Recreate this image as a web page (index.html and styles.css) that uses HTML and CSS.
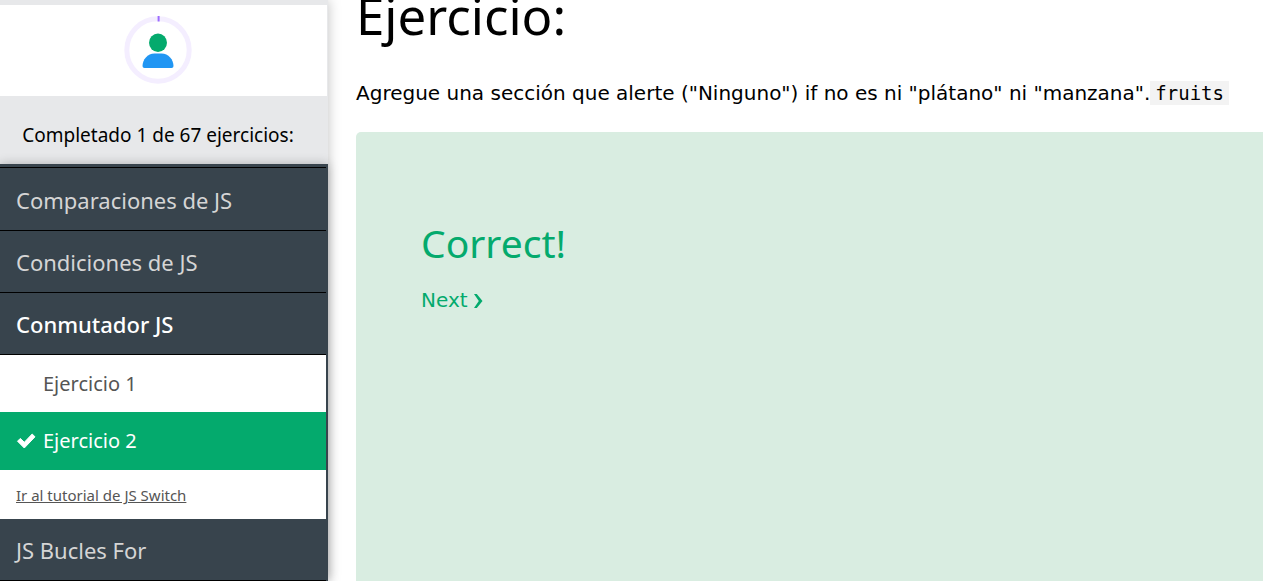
FILE: index.html
```html
<!DOCTYPE html>
<html lang="es">
<head>
<meta charset="utf-8">
<meta name="viewport" content="width=device-width, initial-scale=1">
<title>Ejercicio</title>
<link rel="stylesheet" href="styles.css">
</head>
<body>
<div class="page">
  <aside class="sidebar">
    <div class="profile">
      <svg class="avatar" viewBox="0 0 68 68" role="img" aria-label="Progreso">
        <circle cx="34" cy="34" r="31.2" fill="none" stroke="#f4eeff" stroke-width="5"/>
        <path d="M34.6 0v5.500" fill="none" stroke="#9c6bff" stroke-width="2"/>
        <ellipse cx="34" cy="26.800" rx="9" ry="9.200" fill="#04aa6d"/>
        <path d="M20.500 52q-2 0-2-2c0-6 5-12.400 12-12.400h7c7 0 12 6.400 12 12.400q0 2-2 2z" fill="#2196f3"/>
      </svg>
    </div>
    <p class="summary">Completado 1 de 67 ejercicios:</p>
    <nav class="menu">
      <a class="topic" href="#comparaciones">Comparaciones de JS</a>
      <a class="topic" href="#condiciones">Condiciones de JS</a>
      <a class="topic topic-open" href="#conmutador">Conmutador JS</a>
      <div class="exercises">
        <a class="exercise" href="#ejercicio1"><span class="mark"></span>Ejercicio 1</a>
        <a class="exercise exercise-current" href="#ejercicio2"><span class="mark"><svg class="check" viewBox="0 0 20 16" aria-hidden="true"><path d="M1.500 8.200 4.300 5.400 8.300 9.300 16.200 1 19 3.800 8.300 15z" fill="#fff" stroke="#fff" stroke-width="1" stroke-linejoin="round"/></svg></span>Ejercicio 2</a>
        <a class="tutorial" href="#tutorial">Ir al tutorial de JS Switch</a>
      </div>
      <a class="topic" href="#bucles">JS Bucles For</a>
    </nav>
  </aside>
  <main class="content">
    <h1 class="title">Ejercicio:</h1>
    <p class="task">Agregue una sección que alerte ("Ninguno") if no es ni "plátano" ni "manzana".<code class="code">fruits</code></p>
    <section class="result">
      <h2 class="result-title">Correct!</h2>
      <a class="next" href="#next">Next <svg class="chevron" viewBox="0 0 9 16" aria-hidden="true"><path d="M0 1h2.800L8.500 8l-5.700 7H0l4.800-7z" fill="currentColor"/></svg></a>
    </section>
  </main>
</div>
</body>
</html>
```
FILE: styles.css
```css
* {
  box-sizing: border-box;
}

body {
  margin: 0;
  overflow: hidden;
  background: #fff;
  color: #000;
  font-family: "Noto Sans", "Open Sans", sans-serif;
}

a {
  color: inherit;
  text-decoration: none;
}

.page {
  display: flex;
  height: 100vh;
}

.sidebar {
  display: flex;
  flex: 0 0 328px;
  flex-direction: column;
  padding-top: 5px;
  background: #e7e8ea;
  box-shadow: 0 0 12px rgba(0, 0, 0, 0.25);
}

.profile {
  display: flex;
  flex: none;
  justify-content: center;
  margin-right: 1px;
  padding: 11px 12px 12px 0;
  background: #fff;
}

.avatar {
  width: 68px;
  height: 68px;
}

.summary {
  flex: none;
  margin: 0;
  padding: 24px 12px 14px 0;
  font-size: 19px;
  line-height: 30px;
  text-align: center;
}

.menu {
  flex: 1;
  padding: 3px 2px 0 0;
  background: #38444d;
  box-shadow: 0 0 10px rgba(0, 0, 0, 0.25);
}

.topic {
  display: block;
  padding: 16px 16px 15px;
  border-bottom: 1px solid #000;
  color: #d5d5d5;
  font-size: 22px;
  line-height: 30px;
}

.topic:first-child {
  padding-top: 17px;
  border-top: 1px solid #000;
}

.topic-open {
  color: #fff;
  font-weight: 500;
}

.exercises {
  background: #fff;
  color: #555;
}

.exercise {
  display: flex;
  align-items: center;
  padding: 14px 16px 13px;
  font-size: 20px;
  line-height: 30px;
}

.exercise-current {
  padding-bottom: 14px;
  background: #04aa6d;
  color: #fff;
}

.mark {
  display: flex;
  width: 27px;
}

.check {
  width: 20px;
  height: 16px;
}

.tutorial {
  display: block;
  padding: 13px 16px 12px;
  font-size: 15px;
  line-height: 24px;
  text-decoration: underline;
}

.content {
  display: flex;
  flex: 1;
  flex-direction: column;
  min-width: 0;
  padding-left: 28px;
}

.title {
  margin: -22px 0 0;
  font-size: 51px;
  font-weight: 400;
  line-height: 74px;
}

.task {
  margin: 26px 0 24px;
  font-family: "DejaVu Sans", Verdana, sans-serif;
  font-size: 20px;
  line-height: 30px;
}

.code {
  padding: 1px 5px;
  background: #f3f3f3;
  font-family: "DejaVu Sans Mono", monospace;
  font-size: 19px;
}

.result {
  flex: 1;
  padding: 81px 65px;
  border-radius: 5px 0 0 0;
  background: #d9ede1;
  color: #04aa6d;
}

.result-title {
  margin: 0 0 12px;
  font-size: 39px;
  font-weight: 400;
  line-height: 60px;
}

.next {
  font-family: "DejaVu Sans", Verdana, sans-serif;
  font-size: 20px;
  line-height: 30px;
}

.chevron {
  width: 9px;
  height: 16px;
  vertical-align: -2px;
}
```
